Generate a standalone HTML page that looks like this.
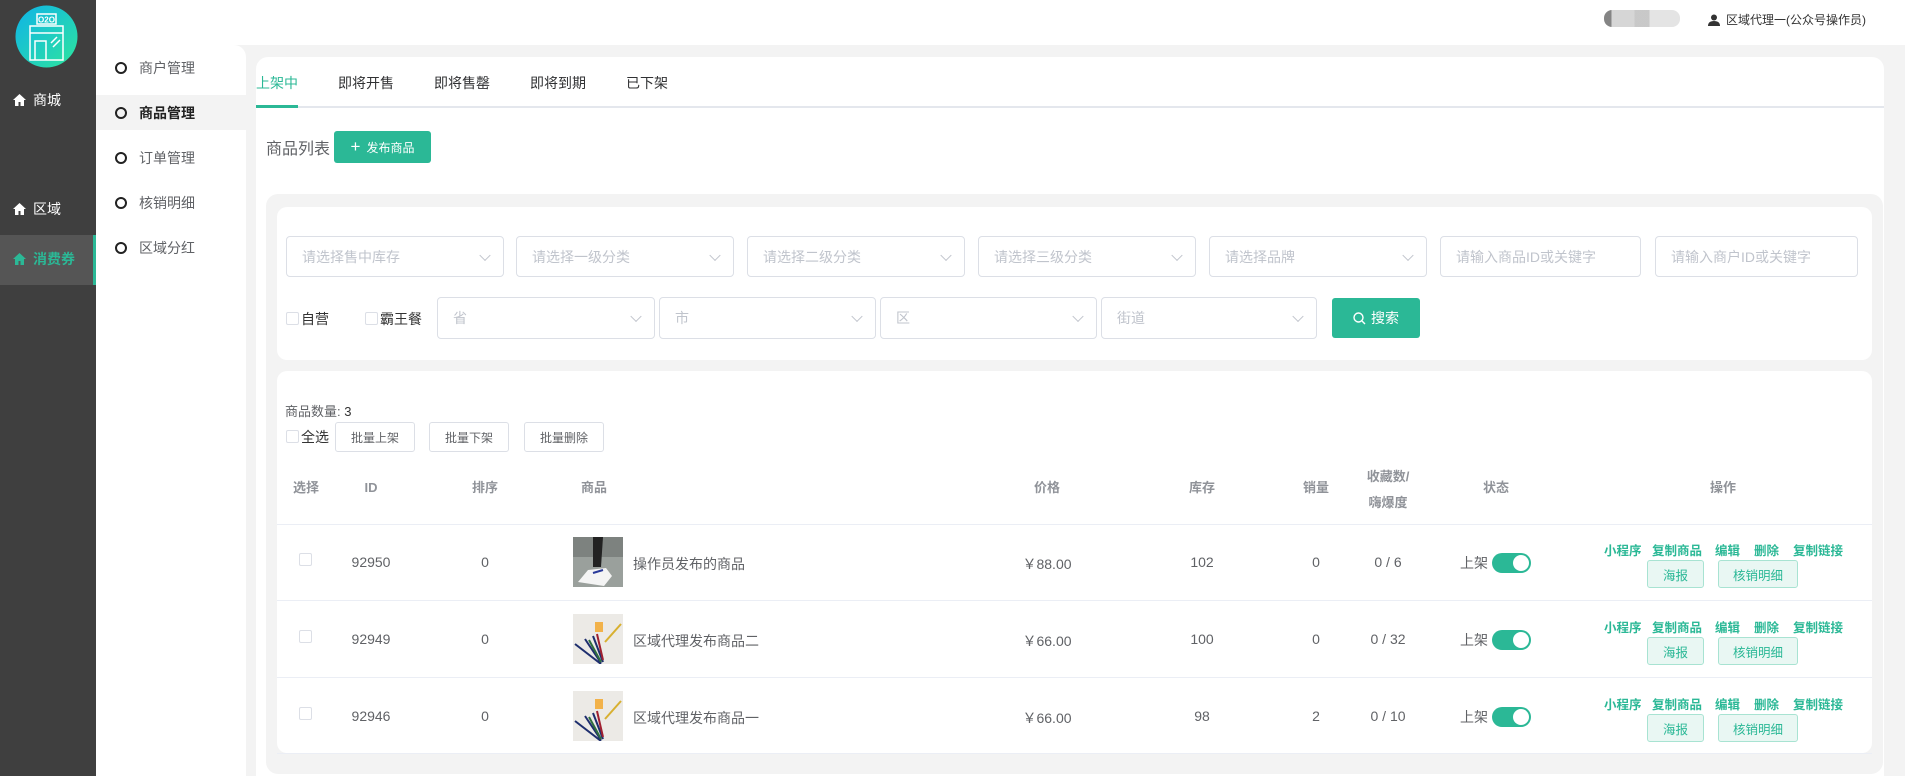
<!DOCTYPE html>
<html><head><meta charset="utf-8"><style>
*{box-sizing:border-box;margin:0;padding:0}
body{width:1905px;height:776px;overflow:hidden;background:#f3f3f3;font-family:"Liberation Sans","Noto Sans CJK SC",sans-serif;font-size:14px;color:#606266;position:relative}
.a{position:absolute}
.sel{position:absolute;border:1px solid #dcdfe6;border-radius:4px;background:#fff;color:#c0c4cc;font-size:14px;padding-left:15px;display:flex;align-items:center}
.sel .ar{position:absolute;right:14px;top:50%;width:8px;height:8px;border-right:1px solid #c0c4cc;border-bottom:1px solid #c0c4cc;transform:translateY(-70%) rotate(45deg)}
.cb{position:absolute;width:13px;height:13px;border:1px solid #dcdfe6;border-radius:2px;background:#fff}
.bb{position:absolute;border:1px solid #dcdfe6;border-radius:3px;background:#fff;color:#606266;font-size:12px;display:flex;align-items:center;justify-content:center}
.th{position:absolute;color:#909399;font-weight:bold;font-size:13px;transform:translateX(-50%);white-space:nowrap;text-align:center;line-height:26px}
.td{position:absolute;transform:translateX(-50%);white-space:nowrap;color:#606266;font-size:14px}
.lk{position:absolute;color:#2bb896;font-weight:bold;font-size:12.5px;white-space:nowrap}
.ob{position:absolute;border:1px solid #a8e3d2;background:#e9f7f3;color:#2bb896;border-radius:3px;font-size:12.5px;display:flex;align-items:center;justify-content:center}
.tg{position:absolute;width:39px;height:20px;border-radius:10px;background:#2bb896}
.tg:after{content:"";position:absolute;right:2px;top:2px;width:16px;height:16px;border-radius:50%;background:#fff}
.hl{position:absolute;left:277px;width:1595px;height:1px;background:#ebeef5}
.mi{position:absolute;left:115px;font-size:14px;color:#606266;display:flex;align-items:center}
.mi i{display:inline-block;width:12px;height:12px;border:2px solid #222;border-radius:50%;margin-right:12px}
</style></head><body>
<!-- header -->
<div class="a" style="left:0;top:0;width:1905px;height:45px;background:#fff"></div>
<div class="a" style="left:1604px;top:10px;width:76px;height:17px;background:linear-gradient(90deg,#666 0 10%,#ccc 10% 40%,#bbb 40% 60%,#ddd 60%);border-radius:8px;opacity:.8"></div>
<div class="a" style="left:1708px;top:11px;font-size:12px;color:#333;display:flex;align-items:center"><svg width="12" height="12" viewBox="0 0 12 12" style="margin-right:6px"><circle cx="6" cy="3.5" r="3" fill="#333"/><path d="M0 12 Q0 7 6 7 Q12 7 12 12Z" fill="#333"/></svg>区域代理一(公众号操作员)</div>
<!-- sidebar -->
<div class="a" style="left:0;top:0;width:96px;height:776px;background:#3f3f3f"></div>
<svg class="a" style="left:15px;top:5px" width="63" height="63" viewBox="0 0 63 63"><defs><linearGradient id="g" x1="0" y1="0" x2="1" y2="1"><stop offset="0" stop-color="#0fb3e8"/><stop offset="1" stop-color="#2ee59d"/></linearGradient></defs><circle cx="31.5" cy="31.5" r="31" fill="url(#g)"/><rect x="22" y="9" width="19" height="10" fill="none" stroke="#fff" stroke-width="1.5"/><text x="31.5" y="17.5" font-size="8" fill="#fff" text-anchor="middle" font-family="Liberation Sans" font-weight="bold">O2O</text><path d="M15 21h33v34H15z M15 28h33 M20 55V36h11v19" fill="none" stroke="#fff" stroke-width="1.5"/><path d="M36 38l6-6 M38 42l7-7" stroke="#fff" stroke-width="1.5"/></svg>
<div class="a" style="left:12px;top:91px;color:#fff;font-size:14px">&#x1F3E0;&#xFE0E;</div>
<div class="a" style="left:12px;top:91px;width:80px;height:20px;background:#3f3f3f"></div>
<div class="a" style="left:13px;top:93px;font-size:14px;color:#fff"><svg width="13" height="12" viewBox="0 0 13 12"><path d="M6.5 0L0 6h2v6h3.5V8h2v4H11V6h2z" fill="#fff"/></svg></div>
<div class="a" style="left:33px;top:90px;font-size:14px;color:#fff">商城</div>
<div class="a" style="left:13px;top:202px"><svg width="13" height="12" viewBox="0 0 13 12"><path d="M6.5 0L0 6h2v6h3.5V8h2v4H11V6h2z" fill="#fff"/></svg></div>
<div class="a" style="left:33px;top:199px;font-size:14px;color:#fff">区域</div>
<div class="a" style="left:0;top:235px;width:96px;height:50px;background:#555;border-right:3px solid #2bb896"></div>
<div class="a" style="left:13px;top:252px"><svg width="13" height="12" viewBox="0 0 13 12"><path d="M6.5 0L0 6h2v6h3.5V8h2v4H11V6h2z" fill="#2bb896"/></svg></div>
<div class="a" style="left:33px;top:249px;font-size:14px;color:#2bb896;font-weight:bold">消费券</div>
<!-- submenu -->
<div class="a" style="left:96px;top:45px;width:150px;height:731px;background:#fff;border-top-right-radius:12px"></div>
<div class="a" style="left:96px;top:95px;width:150px;height:35px;background:#f3f3f3"></div>
<div class="mi" style="top:58px"><i></i>商户管理</div>
<div class="mi" style="top:103px;color:#222;font-weight:bold"><i></i>商品管理</div>
<div class="mi" style="top:148px"><i></i>订单管理</div>
<div class="mi" style="top:193px"><i></i>核销明细</div>
<div class="mi" style="top:238px"><i></i>区域分红</div>
<!-- main card -->
<div class="a" style="left:256px;top:57px;width:1628px;height:719px;background:#fff;border-radius:12px 12px 0 0"></div>
<div class="a" style="left:256px;top:106px;width:1628px;height:2px;background:#e4e7ed"></div>
<div class="a" style="left:256px;top:105px;width:42px;height:3px;background:#2bb896"></div>
<div class="a" style="left:256px;top:73px;color:#2bb896">上架中</div>
<div class="a" style="left:338px;top:73px;color:#303133">即将开售</div>
<div class="a" style="left:434px;top:73px;color:#303133">即将售罄</div>
<div class="a" style="left:530px;top:73px;color:#303133">即将到期</div>
<div class="a" style="left:626px;top:73px;color:#303133">已下架</div>
<div class="a" style="left:266px;top:135px;font-size:16px;color:#606266">商品列表</div>
<div class="a" style="left:334px;top:131px;width:97px;height:32px;background:#2bb896;border-radius:3px;color:#fff;font-size:12px;display:flex;align-items:center;justify-content:center"><span style="font-size:17px;margin-right:6px;font-weight:300">+</span>发布商品</div>
<!-- filter box -->
<div class="a" style="left:266px;top:194px;width:1617px;height:580px;background:#f3f3f3;border-radius:12px"></div>
<div class="a" style="left:277px;top:207px;width:1595px;height:153px;background:#fff;border-radius:10px"></div>
<div class="sel" style="left:286px;top:236px;width:218px;height:41px">请选择售中库存<span class="ar"></span></div>
<div class="sel" style="left:516px;top:236px;width:218px;height:41px">请选择一级分类<span class="ar"></span></div>
<div class="sel" style="left:747px;top:236px;width:218px;height:41px">请选择二级分类<span class="ar"></span></div>
<div class="sel" style="left:978px;top:236px;width:218px;height:41px">请选择三级分类<span class="ar"></span></div>
<div class="sel" style="left:1209px;top:236px;width:218px;height:41px">请选择品牌<span class="ar"></span></div>
<div class="sel" style="left:1440px;top:236px;width:201px;height:41px">请输入商品ID或关键字</div>
<div class="sel" style="left:1655px;top:236px;width:203px;height:41px">请输入商户ID或关键字</div>
<div class="cb" style="left:286px;top:312px"></div><div class="a" style="left:301px;top:309px;color:#333;font-size:14px">自营</div>
<div class="cb" style="left:365px;top:312px"></div><div class="a" style="left:380px;top:309px;color:#333;font-size:14px">霸王餐</div>
<div class="sel" style="left:437px;top:297px;width:218px;height:42px">省<span class="ar"></span></div>
<div class="sel" style="left:659px;top:297px;width:217px;height:42px">市<span class="ar"></span></div>
<div class="sel" style="left:880px;top:297px;width:217px;height:42px">区<span class="ar"></span></div>
<div class="sel" style="left:1101px;top:297px;width:216px;height:42px">街道<span class="ar"></span></div>
<div class="a" style="left:1332px;top:298px;width:88px;height:40px;background:#2bb896;border-radius:3px;color:#fff;font-size:14px;display:flex;align-items:center;justify-content:center"><svg width="13" height="13" viewBox="0 0 13 13" style="margin-right:5px"><circle cx="5.5" cy="5.5" r="4.5" fill="none" stroke="#fff" stroke-width="1.4"/><path d="M9 9l3 3" stroke="#fff" stroke-width="1.4"/></svg>搜索</div>
<!-- table card -->
<div class="a" style="left:277px;top:371px;width:1595px;height:382px;background:#fff;border-radius:10px"></div>
<div class="a" style="left:285px;top:401px;font-size:13px;color:#606266">商品数量: <span style="color:#333">3</span></div>
<div class="cb" style="left:286px;top:430px"></div><div class="a" style="left:301px;top:427px;color:#333;font-size:14px">全选</div>
<div class="bb" style="left:335px;top:422px;width:80px;height:30px">批量上架</div>
<div class="bb" style="left:429px;top:422px;width:80px;height:30px">批量下架</div>
<div class="bb" style="left:524px;top:422px;width:80px;height:30px">批量删除</div>
<div class="th" style="left:306px;top:475px">选择</div>
<div class="th" style="left:371px;top:475px">ID</div>
<div class="th" style="left:485px;top:475px">排序</div>
<div class="th" style="left:594px;top:475px">商品</div>
<div class="th" style="left:1047px;top:475px">价格</div>
<div class="th" style="left:1202px;top:475px">库存</div>
<div class="th" style="left:1316px;top:475px">销量</div>
<div class="th" style="left:1388px;top:464px">收藏数/<br>嗨爆度</div>
<div class="th" style="left:1496px;top:475px">状态</div>
<div class="th" style="left:1723px;top:475px">操作</div>
<div class="hl" style="top:524px"></div>
<div class="hl" style="top:600px"></div>
<div class="hl" style="top:677px"></div>
<div class="hl" style="top:753px"></div>

<!-- row 1 -->
<div class="cb" style="left:299px;top:553px"></div>
<div class="td" style="left:371px;top:554px">92950</div>
<div class="td" style="left:485px;top:554px">0</div>
<svg class="a" style="left:573px;top:537px" width="50" height="50" viewBox="0 0 50 50"><rect width="50" height="50" fill="#9aa09c"/><rect y="0" width="50" height="20" fill="#7d827f"/><path d="M20 0h10l-2 30h-8z" fill="#222"/><path d="M5 45l10-12 18-2 6 8-8 10z" fill="#f4f4f4"/><path d="M20 36l10-3" stroke="#2a3a9a" stroke-width="2"/></svg>
<div class="a" style="left:633px;top:554px">操作员发布的商品</div>
<div class="td" style="left:1047px;top:554px">￥88.00</div>
<div class="td" style="left:1202px;top:554px">102</div>
<div class="td" style="left:1316px;top:554px">0</div>
<div class="td" style="left:1388px;top:554px">0 / 6</div>
<div class="a" style="left:1460px;top:553px;color:#606266">上架</div><div class="tg" style="left:1492px;top:553px"></div>
<div class="lk" style="left:1604px;top:540px">小程序</div><div class="lk" style="left:1652px;top:540px">复制商品</div><div class="lk" style="left:1715px;top:540px">编辑</div><div class="lk" style="left:1754px;top:540px">删除</div><div class="lk" style="left:1793px;top:540px">复制链接</div>
<div class="ob" style="left:1647px;top:560px;width:57px;height:28px">海报</div><div class="ob" style="left:1718px;top:560px;width:80px;height:28px">核销明细</div>

<!-- row 2 -->
<div class="cb" style="left:299px;top:630px"></div>
<div class="td" style="left:371px;top:631px">92949</div>
<div class="td" style="left:485px;top:631px">0</div>
<svg class="a" style="left:573px;top:614px" width="50" height="50" viewBox="0 0 50 50"><rect width="50" height="50" fill="#eceae6"/><rect x="22" y="8" width="8" height="10" fill="#f2b24a"/><path d="M2 30l26 20M12 25l16 24M20 22l10 26" stroke="#1e2e6e" stroke-width="2"/><path d="M16 26l12 22" stroke="#2e6e3e" stroke-width="2"/><path d="M24 20l6 26" stroke="#a02030" stroke-width="2"/><path d="M48 10l-16 18" stroke="#d8b030" stroke-width="2"/></svg>
<div class="a" style="left:633px;top:631px">区域代理发布商品二</div>
<div class="td" style="left:1047px;top:631px">￥66.00</div>
<div class="td" style="left:1202px;top:631px">100</div>
<div class="td" style="left:1316px;top:631px">0</div>
<div class="td" style="left:1388px;top:631px">0 / 32</div>
<div class="a" style="left:1460px;top:630px;color:#606266">上架</div><div class="tg" style="left:1492px;top:630px"></div>
<div class="lk" style="left:1604px;top:617px">小程序</div><div class="lk" style="left:1652px;top:617px">复制商品</div><div class="lk" style="left:1715px;top:617px">编辑</div><div class="lk" style="left:1754px;top:617px">删除</div><div class="lk" style="left:1793px;top:617px">复制链接</div>
<div class="ob" style="left:1647px;top:637px;width:57px;height:28px">海报</div><div class="ob" style="left:1718px;top:637px;width:80px;height:28px">核销明细</div>

<!-- row 3 -->
<div class="cb" style="left:299px;top:707px"></div>
<div class="td" style="left:371px;top:708px">92946</div>
<div class="td" style="left:485px;top:708px">0</div>
<svg class="a" style="left:573px;top:691px" width="50" height="50" viewBox="0 0 50 50"><rect width="50" height="50" fill="#eceae6"/><rect x="22" y="8" width="8" height="10" fill="#f2b24a"/><path d="M2 30l26 20M12 25l16 24M20 22l10 26" stroke="#1e2e6e" stroke-width="2"/><path d="M16 26l12 22" stroke="#2e6e3e" stroke-width="2"/><path d="M24 20l6 26" stroke="#a02030" stroke-width="2"/><path d="M48 10l-16 18" stroke="#d8b030" stroke-width="2"/></svg>
<div class="a" style="left:633px;top:708px">区域代理发布商品一</div>
<div class="td" style="left:1047px;top:708px">￥66.00</div>
<div class="td" style="left:1202px;top:708px">98</div>
<div class="td" style="left:1316px;top:708px">2</div>
<div class="td" style="left:1388px;top:708px">0 / 10</div>
<div class="a" style="left:1460px;top:707px;color:#606266">上架</div><div class="tg" style="left:1492px;top:707px"></div>
<div class="lk" style="left:1604px;top:694px">小程序</div><div class="lk" style="left:1652px;top:694px">复制商品</div><div class="lk" style="left:1715px;top:694px">编辑</div><div class="lk" style="left:1754px;top:694px">删除</div><div class="lk" style="left:1793px;top:694px">复制链接</div>
<div class="ob" style="left:1647px;top:714px;width:57px;height:28px">海报</div><div class="ob" style="left:1718px;top:714px;width:80px;height:28px">核销明细</div>
</body></html>
